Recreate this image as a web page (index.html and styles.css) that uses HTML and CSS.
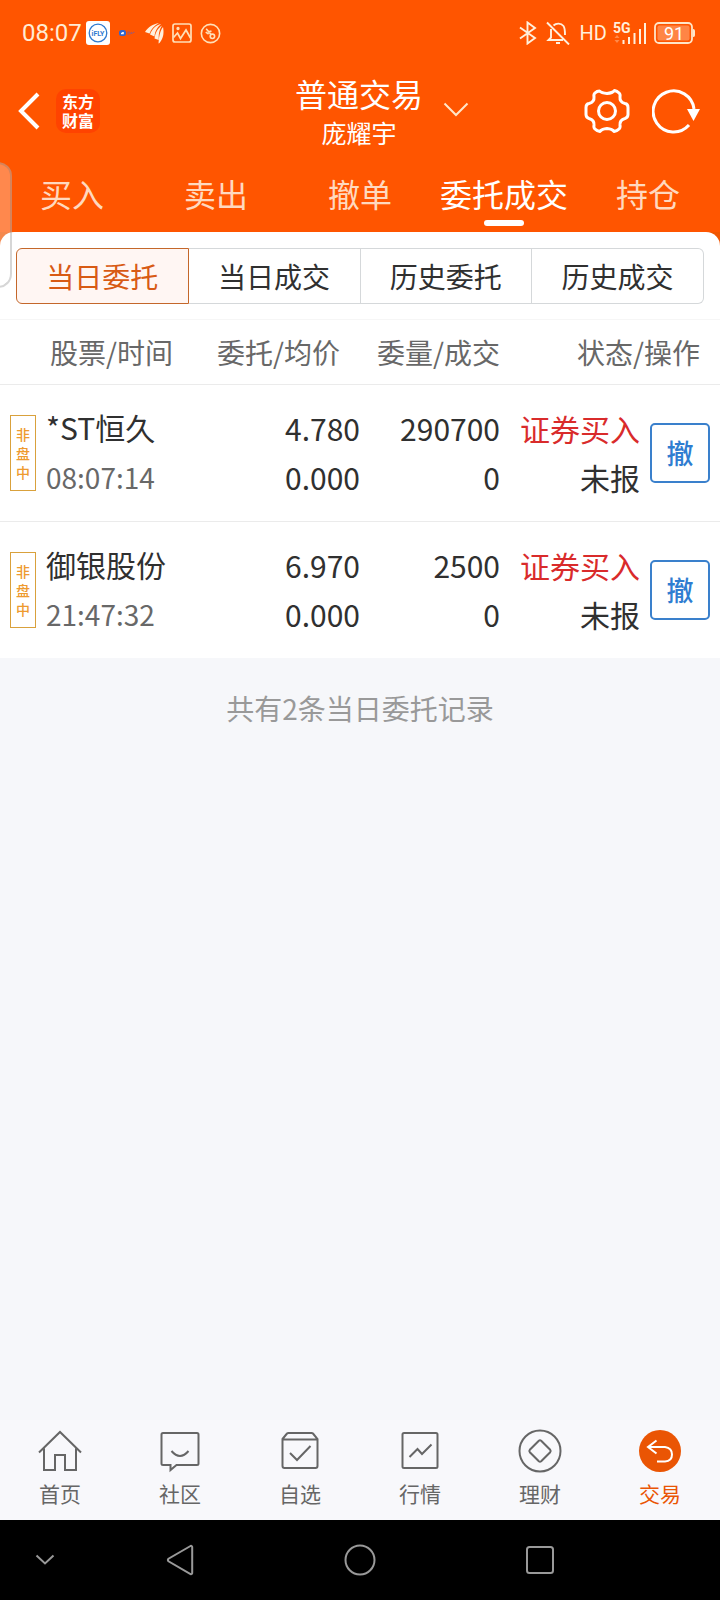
FILE: index.html
```html
<!DOCTYPE html>
<html lang="zh-CN">
<head>
<meta charset="utf-8">
<meta name="viewport" content="width=device-width, initial-scale=1">
<title>普通交易</title>
<link rel="stylesheet" href="styles.css">
</head>
<body>
<div class="app">
  <header class="top">
    <div class="status">
      <div class="status-side">
        <span class="clock">08:07</span>
        <svg class="ifly" width="24" height="24" viewBox="0 0 24 24"><rect width="24" height="24" rx="3" fill="#fff"/><circle cx="12" cy="12" r="8.8" fill="none" stroke="#2f7bd0" stroke-width="1.3"/><text x="12" y="14.500" text-anchor="middle" class="ifly-text">iFLY</text></svg>
        <svg class="cloud" width="16" height="8" viewBox="0 0 16 8"><rect x="0" y="1" width="7" height="6" rx="2.5" fill="#3167d0"/><path d="M2 5.2V3.8h1.2V2.9h1.6v2.3z" fill="#fff"/><path d="M8 3.2h3M8 5h2.4M11.6 5.2l.8-2.200 1 2M14 3.400h1.400" stroke="#9a5a78" stroke-width="1" fill="none"/></svg>
        <svg class="fan" width="19" height="21" viewBox="0 0 19 21" fill="#fff0dc"><path d="M0 9C3 4 8 1 14 0 9 3 6 6 4.500 10.500z"/><path d="M5 11.500C7 6 11 2 16 1c-4 4-6 7-6.500 12.500z"/><path d="M9.500 15.500C10.500 9 13 5 17 2.500c-3 5-3.500 9-3.200 14.500z"/><path d="M13.500 20.500C14 13 15 8 18 4c1 5 .8 11-3.500 16z"/></svg>
        <svg width="20" height="20" viewBox="0 0 20 20" fill="none" stroke="#ffe0b8" stroke-width="1.700"><rect x="1" y="1" width="18" height="18" rx="2"/><path d="M1.500 14.500l4-4.500 3 5.500L14 7l4.500 8"/><circle cx="6" cy="5.500" r=".8"/></svg>
        <svg class="ring" width="21" height="21" viewBox="0 0 22 22" fill="none" stroke="#ffe0b8" stroke-width="1.700"><circle cx="11" cy="11" r="9.600"/><circle cx="13" cy="14" r="2.300"/><path d="M11.500 12L6.500 6M12 8.500l-3 .8M9 11.500L6 9.500"/></svg>
      </div>
      <div class="status-side">
        <svg width="20" height="24" viewBox="0 0 20 24" fill="none" stroke="#fff0dc" stroke-width="1.900"><path d="M2 6.500L17 17l-7.500 5.500v-21L17 7 2 17.500"/></svg>
        <svg class="bell" width="24" height="24" viewBox="0 0 24 24" fill="none" stroke="#fff0dc" stroke-width="1.900"><path d="M1 1.500l22 22M7.500 4.500C10 2 15 1.800 17.500 5c1.500 2 1.500 4 1.500 9M5 8v8.500L2.500 19H17"/><path d="M10 22h4" stroke-width="2"/></svg>
        <span class="hd">HD</span>
        <svg class="signal" width="34" height="29" viewBox="0 0 34 29"><text x="0" y="14" class="five-g">5G</text><path d="M10.500 25v-4M16 25v-7M21.500 25V14M27 25V10M32 25V4" stroke="#fff0dc" stroke-width="2"/><path d="M1.500 19l2.500-3 2.500 3zM1.500 21l2.500 3 2.500-3z" fill="#ff8a4a"/></svg>
        <svg class="battery" width="42" height="23" viewBox="0 0 42 23"><rect x="1" y="1" width="37" height="20" rx="4" fill="none" stroke="#ffe6c8" stroke-width="1.800"/><rect x="3.500" y="3.500" width="32" height="15" rx="2" fill="#ff8545"/><path d="M39 7c2 0 2 1 2 4s0 4-2 4z" fill="#ffe6c8"/><text x="20" y="17.500" text-anchor="middle" class="battery-text">91</text></svg>
      </div>
    </div>

    <div class="bar">
      <div class="bar-side">
        <button class="icon-btn" aria-label="返回"><svg width="22" height="38" viewBox="0 0 22 38" fill="none" stroke="#fff" stroke-width="4"><path d="M20 2L3 19l17 17"/></svg></button>
        <span class="logo">东方财富</span>
      </div>
      <button class="account">
        <span class="account-title">普通交易</span>
        <span class="account-name">庞耀宇</span>
        <svg class="chevron" width="26" height="15" viewBox="0 0 26 15" fill="none" stroke="#ffe6c8" stroke-width="2"><path d="M1.500 1.500L13 13 24.500 1.500"/></svg>
      </button>
      <div class="bar-side bar-end">
        <button class="icon-btn" aria-label="设置"><svg width="46" height="46" viewBox="0 0 46 46" fill="none" stroke="#fff" stroke-width="3" stroke-linejoin="round"><path d="M15.500 3Q13 3 11 5Q9.500 6 10 9Q10.500 14 5 15.500Q2 16 2 19.500V26.500Q2 29.500 5 30.500Q10.500 32 10 37Q9.500 40 11 41Q13 43 16 43.500Q17.500 41 23 40.500Q28.500 41 30 43.500Q33 43 35 41Q36.500 40 36 37Q35.500 32 41 30.500Q44 29.500 44 26.500V19.500Q44 16 41 15.500Q35.500 14 36 9Q36.500 6 35 5Q33 3 30.500 2.500Q28.500 5 23 5.500Q17.500 5 15.500 3Z"/><circle cx="23" cy="23" r="8.500"/></svg></button>
        <button class="icon-btn" aria-label="刷新"><svg width="48" height="46" viewBox="0 0 48 46"><path d="M37 37A20.500 20.500 0 1 1 42 21" fill="none" stroke="#fff" stroke-width="3"/><path d="M35 21h13l-6.500 12z" fill="#fff"/></svg></button>
      </div>
    </div>

    <nav class="tabs">
      <a href="#" class="tab">买入</a>
      <a href="#" class="tab">卖出</a>
      <a href="#" class="tab">撤单</a>
      <a href="#" class="tab tab-on">委托成交</a>
      <a href="#" class="tab">持仓</a>
    </nav>
  </header>

  <main class="content">
    <section class="panel-back">
      <div class="panel">
        <div class="segments">
          <button class="segment segment-on">当日委托</button>
          <button class="segment">当日成交</button>
          <button class="segment">历史委托</button>
          <button class="segment">历史成交</button>
        </div>
        <table class="orders">
          <colgroup><col class="c-name"><col class="c-price"><col class="c-qty"><col class="c-state"><col class="c-act"></colgroup>
          <thead>
            <tr><th class="h-name">股票/时间</th><th class="h-price">委托/均价</th><th>委量/成交</th><th class="h-state" colspan="2">状态/操作</th></tr>
          </thead>
          <tbody>
            <tr>
              <td><div class="stock"><span class="badge">非盘中</span><div>*ST恒久<br><span class="time">08:07:14</span></div></div></td>
              <td>4.780<br>0.000</td>
              <td>290700<br>0</td>
              <td><span class="buy">证券买入</span><br>未报</td>
              <td class="act"><button class="cancel">撤</button></td>
            </tr>
            <tr>
              <td><div class="stock"><span class="badge">非盘中</span><div>御银股份<br><span class="time">21:47:32</span></div></div></td>
              <td>6.970<br>0.000</td>
              <td>2500<br>0</td>
              <td><span class="buy">证券买入</span><br>未报</td>
              <td class="act"><button class="cancel">撤</button></td>
            </tr>
          </tbody>
        </table>
      </div>
    </section>
    <p class="summary">共有2条当日委托记录</p>
  </main>

  <nav class="dock">
    <a href="#" class="dock-item"><svg width="44" height="44" viewBox="0 0 44 44"><path d="M1 22.500L22 2l21 20.500M6 18.500V40h11V25h10v15h11V18.500"/></svg>首页</a>
    <a href="#" class="dock-item"><svg width="44" height="44" viewBox="0 0 44 44"><path d="M5 3h34a1.500 1.500 0 0 1 1.500 1.500v29A1.500 1.500 0 0 1 39 35H18.500l-6 5v-5H5a1.500 1.500 0 0 1-1.500-1.500v-29A1.500 1.500 0 0 1 5 3zM13.500 21q8.500 10 17 0"/></svg>社区</a>
    <a href="#" class="dock-item"><svg width="44" height="44" viewBox="0 0 44 44"><path d="M4.500 9L9 3.500q.5-.5 1.500-.5h23q1 0 1.500.5L39.500 9v27a2 2 0 0 1-2 2h-31a2 2 0 0 1-2-2zM4.500 9.500h35M12 23l7 7 13.500-14"/></svg>自选</a>
    <a href="#" class="dock-item"><svg width="44" height="44" viewBox="0 0 44 44"><rect x="4.500" y="3" width="35" height="35" rx="1.500"/><path d="M11.500 27l8-8 4.500 5 9.500-9.500"/></svg>行情</a>
    <a href="#" class="dock-item"><svg width="44" height="44" viewBox="0 0 44 44"><circle cx="22" cy="21" r="20.500"/><path d="M20.800 10.800q1.200-1 2.400 0l9 9q1 1.200 0 2.400l-9 9q-1.200 1-2.400 0l-9-9q-1-1.200 0-2.400z"/></svg>理财</a>
    <a href="#" class="dock-item dock-on"><svg width="44" height="44" viewBox="0 0 44 44"><circle cx="22" cy="21" r="21" fill="#ea5504" stroke="none"/><path d="M18.500 10.500L10 17l8.500 6.500M10.500 17H27q7 1 7 7.500T27 31.500h-8" stroke="#fff"/></svg>交易</a>
  </nav>

  <div class="system">
    <button class="sys-btn" aria-label="收起"><svg width="20" height="12" viewBox="0 0 20 12"><path d="M1.500 1.500L10 9.500l8.500-8"/></svg></button>
    <button class="sys-btn" aria-label="后退"><svg width="28" height="32" viewBox="0 0 28 32"><path d="M24.500 2L2.500 14.700q-1.200 1.300 0 2.600L24.500 30q1.500.5 1.700-1V3q-.2-1.500-1.700-1z"/></svg></button>
    <button class="sys-btn" aria-label="主页"><svg width="32" height="32" viewBox="0 0 32 32"><circle cx="16" cy="16" r="14.500"/></svg></button>
    <button class="sys-btn" aria-label="最近任务"><svg width="28" height="28" viewBox="0 0 28 28"><rect x="1" y="1" width="26" height="26" rx="2.500"/></svg></button>
  </div>

  <div class="edge-handle"></div>
</div>
</body>
</html>
```
FILE: styles.css
```css
* { box-sizing: border-box; }

body {
  margin: 0;
  font-family: "Noto Sans CJK SC", sans-serif;
  color: #303030;
  background: #f6f7fa;
}

button {
  font: inherit;
  color: inherit;
  padding: 0;
  border: 0;
  background: none;
}

a { color: inherit; text-decoration: none; }
svg { display: block; flex: none; }

.app {
  position: relative;
  display: flex;
  flex-direction: column;
  min-height: 100vh;
}

.top { background: #ff5500; color: #fff; }

.status {
  display: flex;
  justify-content: space-between;
  height: 66px;
  padding: 0 24px 0 22px;
}

.status-side { display: flex; align-items: center; }

.clock {
  font: 24px/24px Roboto, sans-serif;
  color: #ffecd4;
  margin-right: 4px;
}

.ifly-text { font: bold 7px Roboto, sans-serif; fill: #2f7bd0; }
.cloud { margin: 0 10px 0 9px; }
.fan { margin-right: 8px; }
.ring { margin-left: 8px; }
.bell { margin: 0 10px 0 8px; }
.hd { font: 20px/24px Roboto, sans-serif; color: #fff0dc; }
.signal { margin: 0 7px 0 6px; }
.five-g { font: bold 14px Roboto, sans-serif; fill: #fff0dc; }
.battery-text { font: 18px Roboto, sans-serif; fill: #fff; }

.bar {
  display: grid;
  grid-template-columns: 1fr auto 1fr;
  align-items: center;
  height: 90px;
  padding: 0 20px 0 18px;
}

.bar-side { display: flex; align-items: center; gap: 16px; }
.bar-end { justify-content: flex-end; gap: 22px; }

.logo {
  width: 44px;
  height: 44px;
  padding: 3px 5px;
  border-radius: 10px;
  background: #ff4300;
  font-size: 16px;
  line-height: 19px;
  font-weight: 700;
  text-align: center;
}

.account {
  position: relative;
  display: flex;
  flex-direction: column;
  align-items: center;
}

.account-title { font-size: 32px; line-height: 42px; }
.account-name { font-size: 25px; line-height: 36px; }
.chevron { position: absolute; left: calc(100% + 20px); top: 30px; }

.tabs {
  display: grid;
  grid-template-columns: repeat(5, 1fr);
  height: 76px;
}

.tab {
  display: flex;
  flex-direction: column;
  align-items: center;
  padding-top: 14px;
  font-size: 32px;
  line-height: 46px;
  color: #ffd9bf;
  white-space: nowrap;
}

.tab-on { color: #fff; }

.tab-on::after {
  content: "";
  width: 40px;
  height: 6px;
  margin-top: 4px;
  border-radius: 3px;
  background: #fff;
}

.content { flex: 1; }

.panel-back { background: linear-gradient(#f05500 20px, #fff 20px); }

.panel {
  border-radius: 14px 14px 0 0;
  background: #fff;
  padding-top: 16px;
}

.segments { display: flex; padding: 0 16px 15px; }

.segment {
  flex: 1;
  height: 56px;
  border: 1px solid #d5d8da;
  border-left: 0;
  font-size: 28px;
  line-height: 54px;
}

.segment:last-child { border-radius: 0 6px 6px 0; }

.segment-on {
  border: 1px solid #c4672a;
  border-radius: 6px 0 0 6px;
  background: #fff6f3;
  color: #d85a14;
}

.orders {
  width: 100%;
  border-collapse: collapse;
  table-layout: fixed;
  border-top: 1px solid #f6f6f6;
}

.c-name { width: 200px; }
.c-price { width: 160px; }
.c-qty { width: 140px; }
.c-state { width: 140px; }
.c-act { width: 80px; }

.orders th {
  height: 65px;
  padding: 0;
  font-size: 28px;
  line-height: 40px;
  font-weight: 400;
  text-align: right;
  color: #686868;
  white-space: nowrap;
}

.orders .h-name { padding-left: 50px; text-align: left; }
.orders .h-price { padding-right: 20px; }
.orders .h-state { padding-right: 20px; }

.orders td {
  padding: 18px 0 19px;
  border-top: 1px solid #ebebeb;
  font-size: 30px;
  line-height: 49px;
  text-align: right;
  white-space: nowrap;
}

.stock {
  display: flex;
  align-items: center;
  gap: 10px;
  padding-left: 10px;
  text-align: left;
}

.badge {
  width: 26px;
  height: 76px;
  padding: 9px 5px;
  border: 1px solid #d9a13c;
  color: #ee9a2e;
  font-size: 14px;
  line-height: 19px;
  font-weight: 500;
  white-space: normal;
}

.time { color: #686868; font-size: 28px; }
.buy { color: #d92b2b; }

.orders .act { padding: 0 10px 0 0; }

.cancel {
  width: 60px;
  height: 60px;
  border: 2px solid #3a80cc;
  border-radius: 5px;
  color: #2f7dd1;
  font-size: 27px;
  line-height: 56px;
  font-weight: 500;
  vertical-align: middle;
}

.summary {
  margin: 0;
  padding: 29px 0;
  font-size: 28px;
  line-height: 42px;
  text-align: center;
  color: #999;
}

.dock {
  display: grid;
  grid-template-columns: repeat(6, 1fr);
  padding: 10px 0 11px;
  background: #f8f8fb;
}

.dock-item {
  display: flex;
  flex-direction: column;
  align-items: center;
  gap: 3px;
  font-size: 21px;
  line-height: 32px;
  color: #666;
}

.dock-item svg { fill: none; stroke: #666; stroke-width: 2; overflow: visible; }
.dock-on { color: #ea5504; }

.system {
  display: grid;
  grid-template-columns: 90px repeat(3, 1fr) 90px;
  height: 80px;
  background: #000;
}

.sys-btn { display: flex; align-items: center; justify-content: center; }
.sys-btn svg { fill: none; stroke: #999; stroke-width: 2; }

.edge-handle {
  position: absolute;
  left: -2px;
  top: 162px;
  width: 14px;
  height: 126px;
  border: 2px solid rgba(120, 120, 120, 0.3);
  border-radius: 0 16px 16px 0;
  background: rgba(255, 255, 255, 0.3);
}
```
